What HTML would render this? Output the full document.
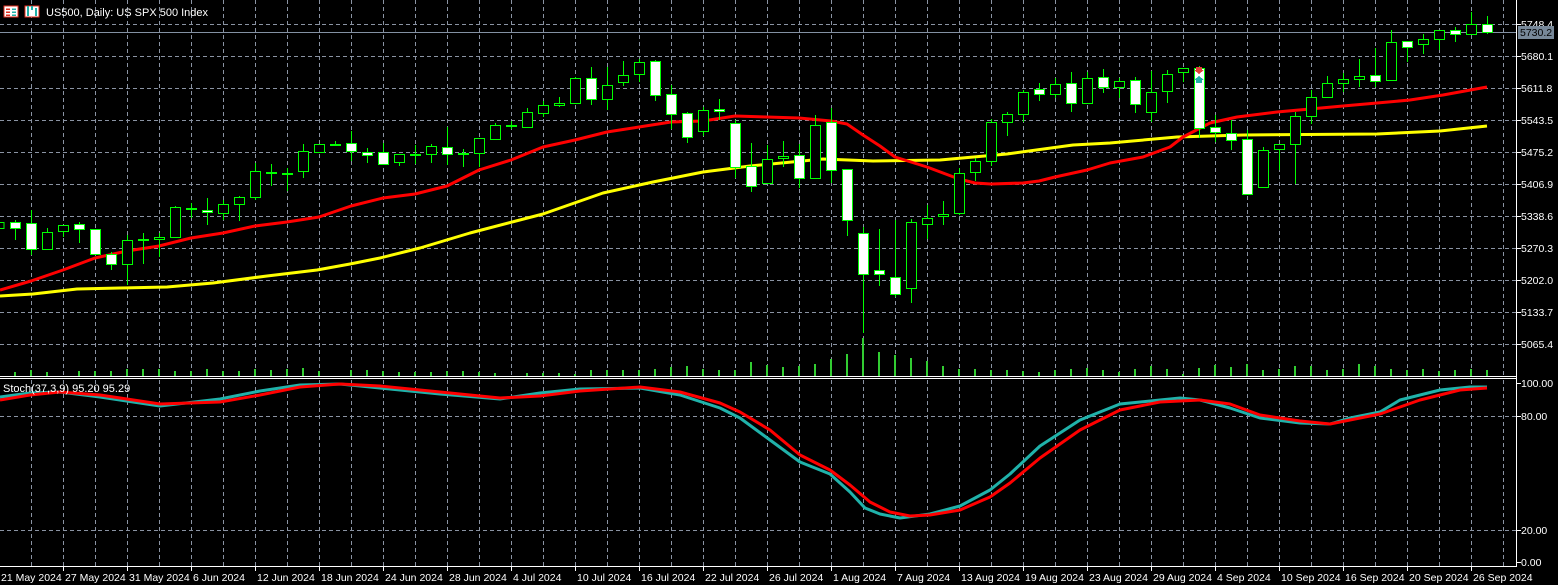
<!DOCTYPE html>
<html><head><meta charset="utf-8"><style>
html,body{margin:0;padding:0;background:#000;width:1558px;height:585px;overflow:hidden}
svg{display:block}
text{font-family:"Liberation Sans","DejaVu Sans",sans-serif;font-size:10.5px;fill:#fff}
</style></head><body>
<svg width="1558" height="585" viewBox="0 0 1558 585" xmlns="http://www.w3.org/2000/svg" shape-rendering="crispEdges">
<rect width="1558" height="585" fill="#000"/>
<g stroke="#8a93a3" stroke-width="1" stroke-dasharray="4,3">
<path d="M0 24.5H1516M0 56.5H1516M0 88.5H1516M0 120.5H1516M0 152.5H1516M0 184.5H1516M0 216.5H1516M0 248.5H1516M0 280.5H1516M0 312.5H1516M0 344.5H1516"/>
<path d="M0 416.5H1516M0 530.5H1516"/>
<path d="M31.5 0V376M63.5 0V376M95.5 0V376M127.5 0V376M159.5 0V376M191.5 0V376M223.5 0V376M255.5 0V376M287.5 0V376M319.5 0V376M351.5 0V376M383.5 0V376M415.5 0V376M447.5 0V376M479.5 0V376M511.5 0V376M543.5 0V376M575.5 0V376M607.5 0V376M639.5 0V376M671.5 0V376M703.5 0V376M735.5 0V376M767.5 0V376M799.5 0V376M831.5 0V376M863.5 0V376M895.5 0V376M927.5 0V376M959.5 0V376M991.5 0V376M1023.5 0V376M1055.5 0V376M1087.5 0V376M1119.5 0V376M1151.5 0V376M1183.5 0V376M1215.5 0V376M1247.5 0V376M1279.5 0V376M1311.5 0V376M1343.5 0V376M1375.5 0V376M1407.5 0V376M1439.5 0V376M1471.5 0V376M1503.5 0V376"/>
<path d="M31.5 380V566M63.5 380V566M95.5 380V566M127.5 380V566M159.5 380V566M191.5 380V566M223.5 380V566M255.5 380V566M287.5 380V566M319.5 380V566M351.5 380V566M383.5 380V566M415.5 380V566M447.5 380V566M479.5 380V566M511.5 380V566M543.5 380V566M575.5 380V566M607.5 380V566M639.5 380V566M671.5 380V566M703.5 380V566M735.5 380V566M767.5 380V566M799.5 380V566M831.5 380V566M863.5 380V566M895.5 380V566M927.5 380V566M959.5 380V566M991.5 380V566M1023.5 380V566M1055.5 380V566M1087.5 380V566M1119.5 380V566M1151.5 380V566M1183.5 380V566M1215.5 380V566M1247.5 380V566M1279.5 380V566M1311.5 380V566M1343.5 380V566M1375.5 380V566M1407.5 380V566M1439.5 380V566M1471.5 380V566M1503.5 380V566"/>
</g>
<path d="M0 32.5H1516" stroke="#8391a3" stroke-width="1"/>
<g stroke="#32cd32" stroke-width="2">
<path d="M15 376V372M31 376V370M47 376V372M79 376V371M95 376V371M111 376V371M127 376V369M143 376V369M159 376V369M175 376V371M191 376V371M207 376V369M223 376V371M239 376V371M255 376V369M271 376V370M287 376V369M303 376V368M319 376V371M351 376V370M367 376V370M383 376V371M399 376V372M415 376V372M431 376V372M447 376V371M463 376V371M479 376V372M495 376V373M527 376V373M543 376V373M559 376V373M575 376V374M591 376V370M607 376V370M623 376V370M639 376V370M655 376V369M671 376V367M687 376V366M703 376V369M719 376V370M735 376V370"/>
<path d="M751 376V362M767 376V365M783 376V367M799 376V366M815 376V364M831 376V359M847 376V354M863 376V338M879 376V352M895 376V355M911 376V358M927 376V361M943 376V366M959 376V369M975 376V369M991 376V370M1007 376V370M1023 376V371M1039 376V372M1055 376V370M1071 376V369M1087 376V368M1103 376V370"/>
<path d="M1119 376V372M1135 376V369M1151 376V366M1167 376V369M1183 376V374M1199 376V368M1215 376V365M1231 376V367M1247 376V364M1263 376V370M1279 376V369M1295 376V366M1311 376V366M1327 376V370M1343 376V369M1359 376V364M1375 376V366M1391 376V369M1407 376V370M1423 376V369M1439 376V371M1455 376V370M1471 376V369M1487 376V370"/>
</g>
<g fill="none" stroke-width="3" shape-rendering="auto" stroke-linejoin="round">
<polyline stroke="#ffff00" points="0,296 33,294 77,289 120,288 167,287 213,283 267,276 317,270 350,264 380,258 420,248 470,233 543,214 603,193 653,182 703,172 750,166 823,159 873,161 940,160 1007,154 1073,145 1110,143 1177,137 1243,135 1377,134 1440,131 1487,126"/>
<polyline stroke="#ff0000" points="0,290 31,281 63,270 95,258 127,251 159,246 191,238 223,233 255,226 287,222 319,217 351,206 383,198 415,194 447,186 479,170 511,160 543,147 575,140 607,132 639,127 671,122 703,121 735,116 767,117 799,118 831,121 847,124 863,135 880,146 895,157 927,167 959,179 975,183 991,184 1023,183 1039,181 1055,177 1087,170 1110,163 1143,157 1170,147 1183,137 1210,123 1237,117 1277,112 1310,109 1343,106 1377,103 1410,100 1443,95 1487,87"/>
</g>
<g stroke="#00ff00" stroke-width="1">
<path d="M-1.5 218V230M15.5 220V240M31.5 210V255M47.5 228V250M63.5 225V237M79.5 222V243M95.5 229V254M111.5 252V270M127.5 235V285M143.5 233V264M159.5 233V257M175.5 206V238M191.5 203V218M207.5 198V225M223.5 200V220M239.5 196V221M255.5 163V200M271.5 164V186M287.5 168V191M303.5 144V178M319.5 144V153M335.5 141V145M351.5 131V161M367.5 148V163M383.5 143V164M399.5 154V166M415.5 145V164M431.5 144V163M447.5 127V165M463.5 149V167M479.5 138V167M495.5 123V140M511.5 121V129M527.5 108V128M543.5 101V117M559.5 97V107M575.5 77V104M591.5 67V105M607.5 67V110M623.5 61V86M639.5 59V82M655.5 60V101M671.5 85V129M687.5 112V143M703.5 107V136M719.5 99V120M735.5 120V178M751.5 143V192M767.5 145V183M783.5 141V167M799.5 144V188M815.5 115V178M831.5 108V183M847.5 169V236M863.5 227V333M879.5 229V286M895.5 220V297M911.5 219V303M927.5 205V239M943.5 201V225M959.5 168V215M975.5 158V181M991.5 119V166M1007.5 112V136M1023.5 90V122M1039.5 83V101M1055.5 78V98M1071.5 72V112M1087.5 72V103M1103.5 69V93M1119.5 78V98M1135.5 77V113M1151.5 71V122M1167.5 70V103M1183.5 68V82M1199.5 66V138M1215.5 115V142M1231.5 120V150M1247.5 130V194M1263.5 147V188M1279.5 144V170M1295.5 112V184M1311.5 90V124M1327.5 76V98M1343.5 73V92M1359.5 59V87M1375.5 48V87M1391.5 30V80M1407.5 41V62M1423.5 34V54M1439.5 30V50M1455.5 27V42M1471.5 12V34M1487.5 16V34"/>
<g fill="#000">
<rect x="-6" y="222.5" width="10" height="6"/>
<rect x="42.5" y="232.5" width="10" height="17"/>
<rect x="58.5" y="225.5" width="10" height="6"/>
<rect x="122.5" y="240.5" width="10" height="24"/>
<rect x="138.5" y="239.5" width="10" height="1"/>
<rect x="154.5" y="237.5" width="10" height="2"/>
<rect x="170.5" y="207.5" width="10" height="30"/>
<rect x="186.5" y="208.5" width="10" height="1"/>
<rect x="218.5" y="204.5" width="10" height="9"/>
<rect x="234.5" y="197.5" width="10" height="7"/>
<rect x="250.5" y="171.5" width="10" height="26"/>
<rect x="266.5" y="172.5" width="10" height="1"/>
<rect x="282.5" y="173.5" width="10" height="1"/>
<rect x="298.5" y="151.5" width="10" height="20"/>
<rect x="314.5" y="144.5" width="10" height="8"/>
<rect x="330.5" y="144.5" width="10" height="1"/>
<rect x="394.5" y="154.5" width="10" height="8"/>
<rect x="410.5" y="154.5" width="10" height="1"/>
<rect x="426.5" y="146.5" width="10" height="8"/>
<rect x="458.5" y="153.5" width="10" height="1"/>
<rect x="474.5" y="138.5" width="10" height="15"/>
<rect x="490.5" y="125.5" width="10" height="14"/>
<rect x="506.5" y="125.5" width="10" height="1"/>
<rect x="522.5" y="112.5" width="10" height="15"/>
<rect x="538.5" y="105.5" width="10" height="8"/>
<rect x="554.5" y="103.5" width="10" height="2"/>
<rect x="570.5" y="78.5" width="10" height="25"/>
<rect x="602.5" y="85.5" width="10" height="14"/>
<rect x="618.5" y="75.5" width="10" height="7"/>
<rect x="634.5" y="62.5" width="10" height="12"/>
<rect x="698.5" y="110.5" width="10" height="21"/>
<rect x="762.5" y="159.5" width="10" height="24"/>
<rect x="778.5" y="156.5" width="10" height="2"/>
<rect x="810.5" y="125.5" width="10" height="53"/>
<rect x="906.5" y="222.5" width="10" height="66"/>
<rect x="922.5" y="218.5" width="10" height="6"/>
<rect x="938.5" y="214.5" width="10" height="2"/>
<rect x="954.5" y="173.5" width="10" height="40"/>
<rect x="970.5" y="161.5" width="10" height="11"/>
<rect x="986.5" y="122.5" width="10" height="39"/>
<rect x="1002.5" y="114.5" width="10" height="8"/>
<rect x="1018.5" y="92.5" width="10" height="22"/>
<rect x="1050.5" y="84.5" width="10" height="10"/>
<rect x="1082.5" y="78.5" width="10" height="25"/>
<rect x="1114.5" y="81.5" width="10" height="6"/>
<rect x="1146.5" y="92.5" width="10" height="20"/>
<rect x="1162.5" y="74.5" width="10" height="17"/>
<rect x="1178.5" y="68.5" width="10" height="4"/>
<rect x="1258.5" y="150.5" width="10" height="37"/>
<rect x="1274.5" y="144.5" width="10" height="5"/>
<rect x="1290.5" y="116.5" width="10" height="28"/>
<rect x="1306.5" y="97.5" width="10" height="19"/>
<rect x="1322.5" y="83.5" width="10" height="14"/>
<rect x="1338.5" y="79.5" width="10" height="4"/>
<rect x="1354.5" y="76.5" width="10" height="3"/>
<rect x="1386.5" y="42.5" width="10" height="38"/>
<rect x="1418.5" y="39.5" width="10" height="5"/>
<rect x="1434.5" y="30.5" width="10" height="9"/>
<rect x="1466.5" y="24.5" width="10" height="10"/>
</g>
<g fill="#fff">
<rect x="10.5" y="222.5" width="10" height="6"/>
<rect x="26.5" y="223.5" width="10" height="26"/>
<rect x="74.5" y="224.5" width="10" height="5"/>
<rect x="90.5" y="229.5" width="10" height="25"/>
<rect x="106.5" y="254.5" width="10" height="10"/>
<rect x="202.5" y="210.5" width="10" height="2"/>
<rect x="346.5" y="143.5" width="10" height="8"/>
<rect x="362.5" y="152.5" width="10" height="3"/>
<rect x="378.5" y="152.5" width="10" height="12"/>
<rect x="442.5" y="147.5" width="10" height="7"/>
<rect x="586.5" y="78.5" width="10" height="21"/>
<rect x="650.5" y="61.5" width="10" height="34"/>
<rect x="666.5" y="94.5" width="10" height="20"/>
<rect x="682.5" y="113.5" width="10" height="24"/>
<rect x="714.5" y="109.5" width="10" height="2"/>
<rect x="730.5" y="123.5" width="10" height="44"/>
<rect x="746.5" y="166.5" width="10" height="20"/>
<rect x="794.5" y="155.5" width="10" height="23"/>
<rect x="826.5" y="122.5" width="10" height="48"/>
<rect x="842.5" y="169.5" width="10" height="51"/>
<rect x="858.5" y="233.5" width="10" height="41"/>
<rect x="874.5" y="270.5" width="10" height="4"/>
<rect x="890.5" y="277.5" width="10" height="17"/>
<rect x="1034.5" y="89.5" width="10" height="5"/>
<rect x="1066.5" y="83.5" width="10" height="20"/>
<rect x="1098.5" y="77.5" width="10" height="10"/>
<rect x="1130.5" y="80.5" width="10" height="24"/>
<rect x="1194.5" y="68.5" width="10" height="60"/>
<rect x="1210.5" y="127.5" width="10" height="5"/>
<rect x="1226.5" y="133.5" width="10" height="7"/>
<rect x="1242.5" y="139.5" width="10" height="55"/>
<rect x="1370.5" y="75.5" width="10" height="6"/>
<rect x="1402.5" y="41.5" width="10" height="6"/>
<rect x="1450.5" y="30.5" width="10" height="4"/>
<rect x="1482.5" y="24.5" width="10" height="8"/>
</g>
</g>
<path d="M1196 67h6v3h2l-5 4-5-4h2z" fill="#e0403a"/>
<path d="M1199 76l5 4h-2v3h-6v-3h-2z" fill="#20b0a8"/>
<path d="M0 376.5H1517M0 378.5H1517" stroke="#fff" stroke-width="1"/>
<g fill="none" stroke-width="3" shape-rendering="auto" stroke-linejoin="round">
<polyline stroke="#20b2aa" points="0,397 30,393 60,392 100,397 160,406 220,399 260,391 300,385 340,384 380,388 440,394 500,399 540,393 580,389 640,388 680,395 720,408 740,418 770,440 800,462 830,474 850,492 865,508 880,514 900,518 930,514 960,506 990,490 1010,474 1040,446 1080,420 1120,404 1160,400 1180,398 1200,400 1230,408 1260,418 1300,423 1330,424 1350,418 1380,412 1400,400 1440,390 1470,387 1487,387"/>
<polyline stroke="#ff0000" points="0,400 30,395 60,392 100,395 160,404 220,402 260,395 300,387 340,384 380,386 440,392 500,398 540,396 580,391 640,387 680,392 720,403 740,412 770,430 800,455 830,470 850,485 870,502 890,512 910,516 930,515 960,510 990,497 1010,483 1040,458 1080,430 1120,410 1160,402 1200,400 1230,404 1260,415 1300,421 1330,424 1360,418 1380,414 1420,400 1460,390 1487,388"/>
</g>
<path d="M1516.5 0V567M0 566.5H1517" stroke="#fff" stroke-width="1"/>
<g stroke="#fff" stroke-width="1">
<path d="M1517 24.5h4M1517 56.5h4M1517 88.5h4M1517 120.5h4M1517 152.5h4M1517 184.5h4M1517 216.5h4M1517 248.5h4M1517 280.5h4M1517 312.5h4M1517 344.5h4M1517 383.5h4M1517 416.5h4M1517 530.5h4M1517 562.5h4"/>
<path d="M-0.5 567v4M63.5 567v4M127.5 567v4M191.5 567v4M255.5 567v4M319.5 567v4M383.5 567v4M447.5 567v4M511.5 567v4M575.5 567v4M639.5 567v4M703.5 567v4M767.5 567v4M831.5 567v4M895.5 567v4M959.5 567v4M1023.5 567v4M1087.5 567v4M1151.5 567v4M1215.5 567v4M1279.5 567v4M1343.5 567v4M1407.5 567v4M1471.5 567v4"/>
</g>
<g>
<text x="1521" y="28">5748.4</text>
<text x="1521" y="60">5680.1</text>
<text x="1521" y="92">5611.8</text>
<text x="1521" y="124">5543.5</text>
<text x="1521" y="156">5475.2</text>
<text x="1521" y="188">5406.9</text>
<text x="1521" y="220">5338.6</text>
<text x="1521" y="252">5270.3</text>
<text x="1521" y="284">5202.0</text>
<text x="1521" y="316">5133.7</text>
<text x="1521" y="348">5065.4</text>
<text x="1521" y="387">100.00</text>
<text x="1521" y="420">80.00</text>
<text x="1521" y="534">20.00</text>
<text x="1521" y="566">0.00</text>
</g>
<rect x="1518" y="26" width="36" height="13" fill="#778899"/>
<text x="1520" y="36" style="fill:#000">5730.2</text>
<g>
<text x="1" y="581">21 May 2024</text>
<text x="65" y="581">27 May 2024</text>
<text x="129" y="581">31 May 2024</text>
<text x="193" y="581">6 Jun 2024</text>
<text x="257" y="581">12 Jun 2024</text>
<text x="321" y="581">18 Jun 2024</text>
<text x="385" y="581">24 Jun 2024</text>
<text x="449" y="581">28 Jun 2024</text>
<text x="513" y="581">4 Jul 2024</text>
<text x="577" y="581">10 Jul 2024</text>
<text x="641" y="581">16 Jul 2024</text>
<text x="705" y="581">22 Jul 2024</text>
<text x="769" y="581">26 Jul 2024</text>
<text x="833" y="581">1 Aug 2024</text>
<text x="897" y="581">7 Aug 2024</text>
<text x="961" y="581">13 Aug 2024</text>
<text x="1025" y="581">19 Aug 2024</text>
<text x="1089" y="581">23 Aug 2024</text>
<text x="1153" y="581">29 Aug 2024</text>
<text x="1217" y="581">4 Sep 2024</text>
<text x="1281" y="581">10 Sep 2024</text>
<text x="1345" y="581">16 Sep 2024</text>
<text x="1409" y="581">20 Sep 2024</text>
<text x="1473" y="581">26 Sep 2024</text>
</g>
<rect x="4" y="6" width="14" height="11" fill="#fff" stroke="#e03020" stroke-width="1"/>
<path d="M6 9h4M6 12h4M6 15h4" stroke="#e03020" stroke-width="1.5"/>
<path d="M12 9h4M12 12h4M12 15h4" stroke="#20b0a8" stroke-width="1.5"/>
<rect x="25" y="6" width="14" height="11" fill="#fff" stroke="#e03020"/>
<path d="M28 6v10M32 6v4M36 8v8" stroke="#20b0a8" stroke-width="2"/>
<text x="46" y="16" style="font-size:11px">US500, Daily:  US SPX 500 Index</text>
<text x="3" y="392" style="font-size:11px">Stoch(37,3,9) 95.20 95.29</text>
</svg>
</body></html>
